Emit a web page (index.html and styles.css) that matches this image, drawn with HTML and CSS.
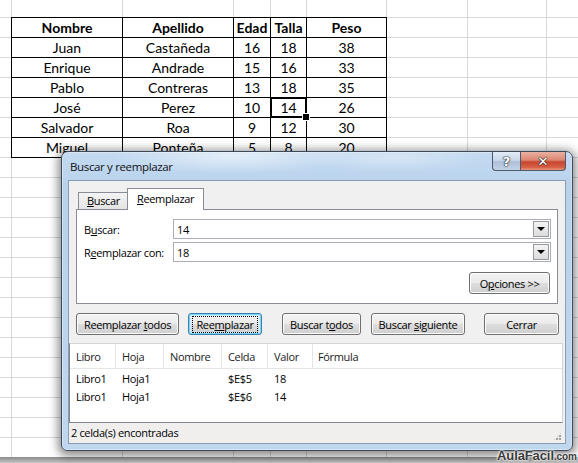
FILE: index.html
```html
<!DOCTYPE html>
<html lang="es">
<head>
<meta charset="utf-8">
<title>Buscar y reemplazar</title>
<link rel="stylesheet" href="styles.css">
</head>
<body>
<div class="sheet">
  <table class="data">
    <colgroup><col class="c1"><col class="c2"><col class="c3"><col class="c4"><col class="c5"></colgroup>
    <tr class="head"><td>Nombre</td><td>Apellido</td><td>Edad</td><td>Talla</td><td>Peso</td></tr>
    <tr><td>Juan</td><td>Castañeda</td><td>16</td><td>18</td><td>38</td></tr>
    <tr><td>Enrique</td><td>Andrade</td><td>15</td><td>16</td><td>33</td></tr>
    <tr><td>Pablo</td><td>Contreras</td><td>13</td><td>18</td><td>35</td></tr>
    <tr><td>José</td><td>Perez</td><td>10</td><td class="active">14</td><td>26</td></tr>
    <tr><td>Salvador</td><td>Roa</td><td>9</td><td>12</td><td>30</td></tr>
    <tr><td>Miguel</td><td>Ponteña</td><td>5</td><td>8</td><td>20</td></tr>
  </table>
</div>
<div class="band"></div>

<div class="dialog">
  <div class="titlebar">
    <span class="title">Buscar y reemplazar</span>
    <div class="caption">
      <div class="cap-help">?</div>
      <div class="cap-close">✕</div>
    </div>
  </div>
  <div class="client">
    <div class="tabs">
      <div class="tab"><span><u>B</u>uscar</span></div>
      <div class="tab sel"><span><u>R</u>eemplazar</span></div>
    </div>
    <div class="panel">
      <div class="field">
        <span class="label">B<u>u</u>scar:</span>
        <div class="combo"><span class="val">14</span><span class="drop"></span></div>
      </div>
      <div class="field">
        <span class="label">R<u>e</u>emplazar con:</span>
        <div class="combo"><span class="val">18</span><span class="drop"></span></div>
      </div>
      <div class="opts"><div class="btn b-opt"><span>O<u>p</u>ciones &gt;&gt;</span></div></div>
    </div>
    <div class="actions">
      <div class="btn b-rt"><span>Reemplazar <u>t</u>odos</span></div>
      <div class="btn b-r focus"><span class="focusrect">Ree<u>m</u>plazar</span></div>
      <div class="btn b-bt"><span>Buscar t<u>o</u>dos</span></div>
      <div class="btn b-bs"><span>Buscar <u>s</u>iguiente</span></div>
      <div class="btn b-c"><span>Cerrar</span></div>
    </div>
    <div class="list">
      <div class="lrow lhead">
        <span class="col k1">Libro</span><span class="col k2">Hoja</span><span class="col k3">Nombre</span><span class="col k4">Celda</span><span class="col k5">Valor</span><span class="col k6">Fórmula</span>
      </div>
      <div class="lrow item first">
        <span class="col k1">Libro1</span><span class="col k2">Hoja1</span><span class="col k3"></span><span class="col k4">$E$5</span><span class="col k5">18</span><span class="col k6"></span>
      </div>
      <div class="lrow item">
        <span class="col k1">Libro1</span><span class="col k2">Hoja1</span><span class="col k3"></span><span class="col k4">$E$6</span><span class="col k5">14</span><span class="col k6"></span>
      </div>
    </div>
    <div class="status">2 celda(s) encontradas<span class="grip"></span></div>
  </div>
</div>

<div class="mark">AulaFacil<span class="dot">.com</span></div>
</body>
</html>
```

FILE: styles.css
```css
* { box-sizing: border-box; }
html, body { margin: 0; padding: 0; }
body {
  width: 578px;
  height: 463px;
  overflow: hidden;
  position: relative;
  background: #fff;
  font-family: "Open Sans", "Liberation Sans", sans-serif;
  font-size: 11px;
  color: #000;
}

/* ---------- spreadsheet ---------- */
.sheet {
  height: 457px;
  padding: 17px 0 0 11px;
  background-color: #fff;
  background-image:
    linear-gradient(#d9d9d9, #d9d9d9),
    linear-gradient(#d9d9d9, #d9d9d9),
    linear-gradient(#d9d9d9, #d9d9d9),
    linear-gradient(#d9d9d9, #d9d9d9),
    linear-gradient(#d9d9d9, #d9d9d9),
    linear-gradient(#d9d9d9, #d9d9d9),
    linear-gradient(#d9d9d9, #d9d9d9),
    linear-gradient(#d9d9d9, #d9d9d9),
    repeating-linear-gradient(180deg, transparent 0 17px, #d9d9d9 17px 18px, transparent 18px 20px);
  background-size: 1px 100%, 1px 100%, 1px 100%, 1px 100%, 1px 100%, 1px 100%, 1px 100%, 1px 100%, 100% 100%;
  background-position: 11px 0, 122px 0, 233px 0, 270px 0, 306px 0, 386px 0, 467px 0, 546px 0, 0 0;
  background-repeat: no-repeat;
}
.band {
  height: 6px;
  background: linear-gradient(#8a8a8a, #c6c6c6);
}
.data {
  border-collapse: collapse;
  table-layout: fixed;
  width: 376px;
  background: #fff;
  font-family: Lato, "Liberation Sans", sans-serif;
  font-size: 14px;
}
.data col.c1 { width: 111px; }
.data col.c2 { width: 111px; }
.data col.c3 { width: 37px; }
.data col.c4 { width: 36px; }
.data col.c5 { width: 80px; }
.data tr { height: 20px; }
.data td {
  border: 1px solid #000;
  padding: 0;
  text-align: center;
  line-height: 18px;
  white-space: nowrap;
}
.data .head td { font-weight: bold; }
.data td.active { position: relative; }
.data td.active::after {
  content: "";
  position: absolute;
  left: -1px; top: -1px; right: -1px; bottom: -1px;
  border: 2px solid #000;
}
.data td.active::before {
  content: "";
  position: absolute;
  right: -4px; bottom: -4px;
  width: 6px; height: 6px;
  background: #000;
  border: 1px solid #fff;
  z-index: 1;
}

/* ---------- dialog window ---------- */
.dialog {
  position: absolute;
  left: 61px;
  top: 151px;
  width: 512px;
  height: 300px;
  border: 1px solid #3d4a5a;
  border-radius: 7px 7px 6px 6px;
  padding: 0 6px 6px;
  display: flex;
  flex-direction: column;
  letter-spacing: -0.35px;
  background:
    radial-gradient(ellipse 120px 18px at 170px 4px, rgba(255,255,255,.55), rgba(255,255,255,0)),
    radial-gradient(ellipse 90px 14px at 330px 6px, rgba(255,255,255,.35), rgba(255,255,255,0)),
    linear-gradient(180deg, #c3daf1 0%, #b9d2ec 12%, #bfd7ef 100%);
  box-shadow: 0 0 0 1px rgba(255,255,255,.35) inset, 0 2px 10px 3px rgba(0,0,0,.45);
}
.titlebar {
  height: 28px;
  display: flex;
  align-items: flex-start;
}
.title {
  padding-left: 2px;
  line-height: 30px;
  font-size: 11.5px;
  color: #111;
}
.caption {
  margin-left: auto;
  display: flex;
}
.cap-help, .cap-close {
  height: 19px;
  display: flex;
  align-items: center;
  justify-content: center;
  font-weight: bold;
  color: #fff;
  border: 1px solid #4c5a6c;
  border-top: none;
  letter-spacing: 0;
  text-shadow: 0 0 1px #333, 0 0 1px #333, 0 0 2px #222;
}
.cap-help {
  width: 28px;
  border-radius: 0 0 0 4px;
  border-right: none;
  font-size: 13px;
  font-family: "DejaVu Sans", sans-serif;
  background: linear-gradient(180deg, #e3ecf6 0%, #c9d8ea 45%, #aebfd6 55%, #c4d4e6 100%);
}
.cap-close {
  width: 46px;
  border-radius: 0 0 4px 0;
  font-size: 13px;
  font-family: "DejaVu Sans", sans-serif;
  background: linear-gradient(180deg, #eab0a4 0%, #dc8670 45%, #c74630 55%, #d55f44 85%, #e89a7c 100%);
}

.client {
  flex: 1;
  border: 1px solid #8a9cb2;
  background: #f0f0f0;
  display: flex;
  flex-direction: column;
}

/* tabs */
.tabs {
  margin: 7px 7px 0 9px;
  height: 21px;
  display: flex;
  align-items: flex-end;
  position: relative;
  z-index: 1;
}
.tab {
  height: 17px;
  padding: 0 8px;
  border: 1px solid #898c95;
  border-bottom: none;
  background: linear-gradient(#f4f4f4, #e4e4e4);
  line-height: 16px;
  color: #000;
  white-space: nowrap;
}
.tab:first-child { width: 49px; border-right: none; }
.tab.sel {
  width: 77px;
  height: 22px;
  margin-bottom: -1px;
  padding: 0 9px;
  background: #fff;
  line-height: 20px;
}

.panel {
  margin: 0 7px;
  height: 95px;
  border: 1px solid #898c95;
  background: #fff;
  padding: 9px 6px 9px 7px;
  display: flex;
  flex-direction: column;
  gap: 3px;
}
.field {
  display: flex;
  align-items: center;
  height: 20px;
}
.label { width: 89px; white-space: nowrap; }
.combo {
  flex: 1;
  height: 20px;
  border: 1px solid #a9adb5;
  display: flex;
  align-items: center;
  padding: 0 1px 0 3px;
}
.combo .val { flex: 1; }
.drop {
  width: 16px;
  height: 16px;
  border: 1px solid #9a9a9a;
  background: linear-gradient(#f4f4f4, #dcdcdc);
  position: relative;
}
.drop::after {
  content: "";
  position: absolute;
  left: 3px; top: 5px;
  border-left: 4px solid transparent;
  border-right: 4px solid transparent;
  border-top: 4px solid #000;
}
.opts {
  margin-top: 7px;
  display: flex;
  justify-content: flex-end;
  padding-right: 1px;
}

/* buttons */
.btn {
  height: 22px;
  border: 1px solid #707070;
  border-radius: 3px;
  background: linear-gradient(180deg, #f3f3f3 0%, #ebebeb 48%, #dddddd 52%, #cfcfcf 100%);
  box-shadow: inset 0 0 0 1px #fcfcfc;
  display: flex;
  align-items: center;
  justify-content: center;
  white-space: nowrap;
  color: #000;
}
.b-opt { width: 81px; }
.actions {
  margin-top: 9px;
  padding-left: 7px;
  display: flex;
}
.b-rt { width: 103px; }
.b-r { width: 74px; margin-left: 9px; }
.b-bt { width: 79px; margin-left: 20px; }
.b-bs { width: 94px; margin-left: 10px; }
.b-c { width: 75px; margin-left: 19px; }
.btn.focus {
  border-color: #3c7fb1;
  box-shadow: inset 0 0 0 1px #7fd4f5, inset 0 0 0 2px #c9eefc;
}
.focusrect {
  outline: 1px dotted #000;
  outline-offset: 0;
  padding: 0 3px;
  line-height: 15px;
}

/* list view */
.list {
  margin: 8px 2px 0 0;
  height: 80px;
  border: 1px solid #828790;
  border-top-color: #d5d5d5;
  border-right-color: #d5d5d5;
  background: #fff;
}
.lrow { display: flex; }
.lhead {
  height: 25px;
  border-bottom: 1px solid #e5e5e5;
  align-items: center;
  color: #222;
}
.lhead .col {
  height: 24px;
  line-height: 26px;
  border-right: 1px solid #e5e5e5;
}
.item { height: 18px; line-height: 18px; }
.item.first { margin-top: 1px; }
.col { padding-left: 6px; white-space: nowrap; }
.k1 { width: 46px; }
.k2 { width: 48px; }
.k3 { width: 58px; }
.k4 { width: 46px; }
.k5 { width: 45px; }
.k6 { flex: 1; padding-left: 5px; }
.lhead .k6 { border-right: none; }

.status {
  flex: 1;
  position: relative;
  padding-left: 2px;
  line-height: 20px;
  background: #f0efee;
}
.grip {
  position: absolute;
  right: 3px;
  bottom: 2px;
  width: 9px;
  height: 9px;
  background:
    radial-gradient(circle at 1px 1px, #a0a0a0 1px, transparent 1.2px);
  background-size: 3px 3px;
  clip-path: polygon(100% 0, 100% 100%, 0 100%);
}

/* watermark */
.mark {
  position: absolute;
  left: 497px;
  top: 449px;
  font-family: "Liberation Sans", sans-serif;
  font-weight: bold;
  font-size: 13px;
  line-height: 14px;
  color: #3a3a3a;
  letter-spacing: -0.1px;
  text-shadow: 0 0 2px #fff, 0 0 2px #fff, 0 0 3px #fff;
  white-space: nowrap;
}
.mark .dot { font-size: 10px; }
```
